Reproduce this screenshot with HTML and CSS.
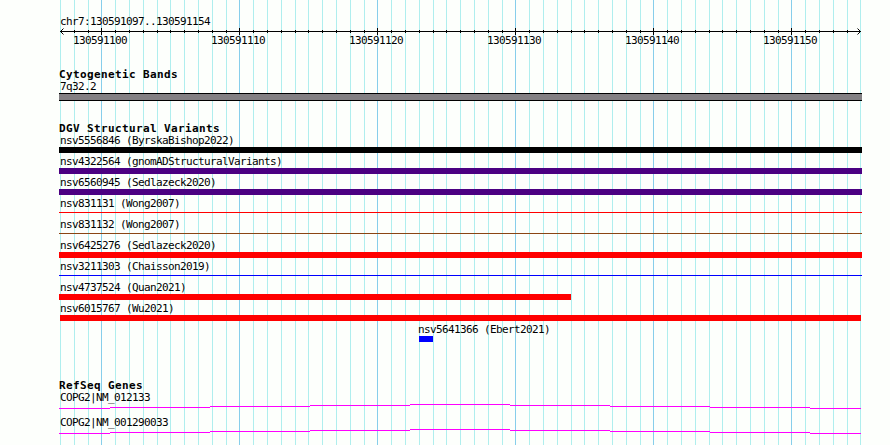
FILE: index.html
```
<!DOCTYPE html>
<html>
<head>
    <meta charset="utf-8">
    <title>chr7:130591097..130591154</title>
    <link rel="stylesheet" href="styles.css">
</head>
<body>

<div class="browser">
    <svg class="grid" width="890" height="445">
        <path class="minor" id="minorLines"/>
        <path class="major" id="majorLines"/>
    </svg>

    <div class="ruler">
        <div class="label">chr7:130591097..130591154</div>
        <svg class="axis" width="803" height="7">
            <path d="M1 3.5H802M4.5 0.5L1.5 3.5L4.5 6.5M798.5 0.5L801.5 3.5L798.5 6.5"/>
            <path class="ticks" id="ticks"/>
        </svg>
        <div class="positions">
            <span>130591100</span>
            <span>130591110</span>
            <span>130591120</span>
            <span>130591130</span>
            <span>130591140</span>
            <span>130591150</span>
        </div>
    </div>

    <div class="track bands">
        <div class="title">Cytogenetic Bands</div>
        <div class="label">7q32.2</div>
        <div class="band"></div>
    </div>

    <div class="track variants">
        <div class="title">DGV Structural Variants</div>
        <div class="feature">
            <div class="label">nsv5556846 (ByrskaBishop2022)</div>
            <div class="bar black"></div>
        </div>
        <div class="feature">
            <div class="label">nsv4322564 (gnomADStructuralVariants)</div>
            <div class="bar purple"></div>
        </div>
        <div class="feature">
            <div class="label">nsv6560945 (Sedlazeck2020)</div>
            <div class="bar purple"></div>
        </div>
        <div class="feature">
            <div class="label">nsv831131 (Wong2007)</div>
            <div class="bar thin red"></div>
        </div>
        <div class="feature">
            <div class="label">nsv831132 (Wong2007)</div>
            <div class="bar thin brown"></div>
        </div>
        <div class="feature">
            <div class="label">nsv6425276 (Sedlazeck2020)</div>
            <div class="bar red"></div>
        </div>
        <div class="feature">
            <div class="label">nsv3211303 (Chaisson2019)</div>
            <div class="bar thin blue"></div>
        </div>
        <div class="feature">
            <div class="label">nsv4737524 (Quan2021)</div>
            <div class="bar red partial"></div>
        </div>
        <div class="feature">
            <div class="label">nsv6015767 (Wu2021)</div>
            <div class="bar red inner"></div>
        </div>
        <div class="feature inside">
            <div class="label">nsv5641366 (Ebert2021)</div>
            <div class="bar blue small"></div>
        </div>
    </div>

    <div class="track genes">
        <div class="title">RefSeq Genes</div>
        <div class="gene">
            <div class="label">COPG2|NM_012133</div>
            <svg class="intron" width="803" height="5">
                <path d="M0 4.5H51M51 3.5H151M151 2.5H251M251 1.5H351M351 0.5H451M451 1.5H551M551 2.5H651M651 3.5H751M751 4.5H802"/>
            </svg>
        </div>
        <div class="gene">
            <div class="label">COPG2|NM_001290033</div>
            <svg class="intron" width="803" height="5">
                <path d="M0 4.5H51M51 3.5H151M151 2.5H251M251 1.5H351M351 0.5H451M451 1.5H551M551 2.5H651M651 3.5H751M751 4.5H802"/>
            </svg>
        </div>
    </div>
</div>

<script>
    // One line per base, a darker one every ten bases
    let minor = "";
    let major = "";
    let ticks = "";
    for (let i = 0; i <= 58; i++) {
        let x = Math.round(60 + i * 13.8) + 0.5;
        if (i % 10 == 3) {
            major += "M" + x + " 0V445";
            ticks += "M" + (x - 59) + " 0V7";
        } else {
            minor += "M" + x + " 0V445";
            if (i > 0 && i < 58) {
                ticks += "M" + (x - 59) + " 2V5";
            }
        }
    }
    document.getElementById("minorLines").setAttribute("d", minor);
    document.getElementById("majorLines").setAttribute("d", major);
    document.getElementById("ticks").setAttribute("d", ticks);
</script>

</body>
</html>
```
FILE: styles.css
```
body {
    margin: 0;
    background-color: #fdfffc;
    color: black;
    font-family: "DejaVu Sans Mono", monospace;
    font-size: 11px;
    overflow: hidden;
}
.browser {
    position: relative;
    box-sizing: border-box;
    width: 890px;
    height: 445px;
    padding: 13px 28px 0 59px;
    overflow: hidden;
}
svg {
    display: block;
    fill: none;
}
.grid {
    position: absolute;
    top: 0;
    left: 0;
    z-index: -1;
}
.minor {
    stroke: #afeeee;
}
.major {
    stroke: #87ceeb;
}
.label {
    height: 15px;
    padding-left: 1px;
    line-height: 17px;
    letter-spacing: -0.622px;
    white-space: pre;
}
.title {
    height: 12px;
    line-height: 17px;
    font-weight: bold;
    letter-spacing: 0.378px;
    white-space: pre;
}
.ruler {
    height: 53px;
}
.axis {
    stroke: black;
}
.positions {
    display: flex;
    margin-top: -3px;
    padding-left: 14px;
    line-height: 17px;
    letter-spacing: -0.622px;
}
.positions span {
    flex: 0 0 138px;
}
.bands {
    height: 54px;
}
.band {
    box-sizing: border-box;
    height: 8px;
    background: #838083;
    border-top: 1px solid black;
    border-bottom: 1px solid black;
}
.variants {
    height: 257px;
}
.feature {
    height: 21px;
}
.bar {
    height: 6px;
}
.thin {
    height: 1px;
    margin-top: 2px;
}
.black {
    background: black;
}
.purple {
    background: #4b0082;
}
.red {
    background: red;
}
.brown {
    background: #8b4513;
}
.blue {
    background: blue;
}
.partial {
    width: 512px;
}
.inner {
    margin: 0 1px;
}
.inside {
    padding-left: 358px;
}
.small {
    width: 14px;
    margin-left: 2px;
}
.gene {
    height: 25px;
}
.intron {
    stroke: magenta;
}
```
